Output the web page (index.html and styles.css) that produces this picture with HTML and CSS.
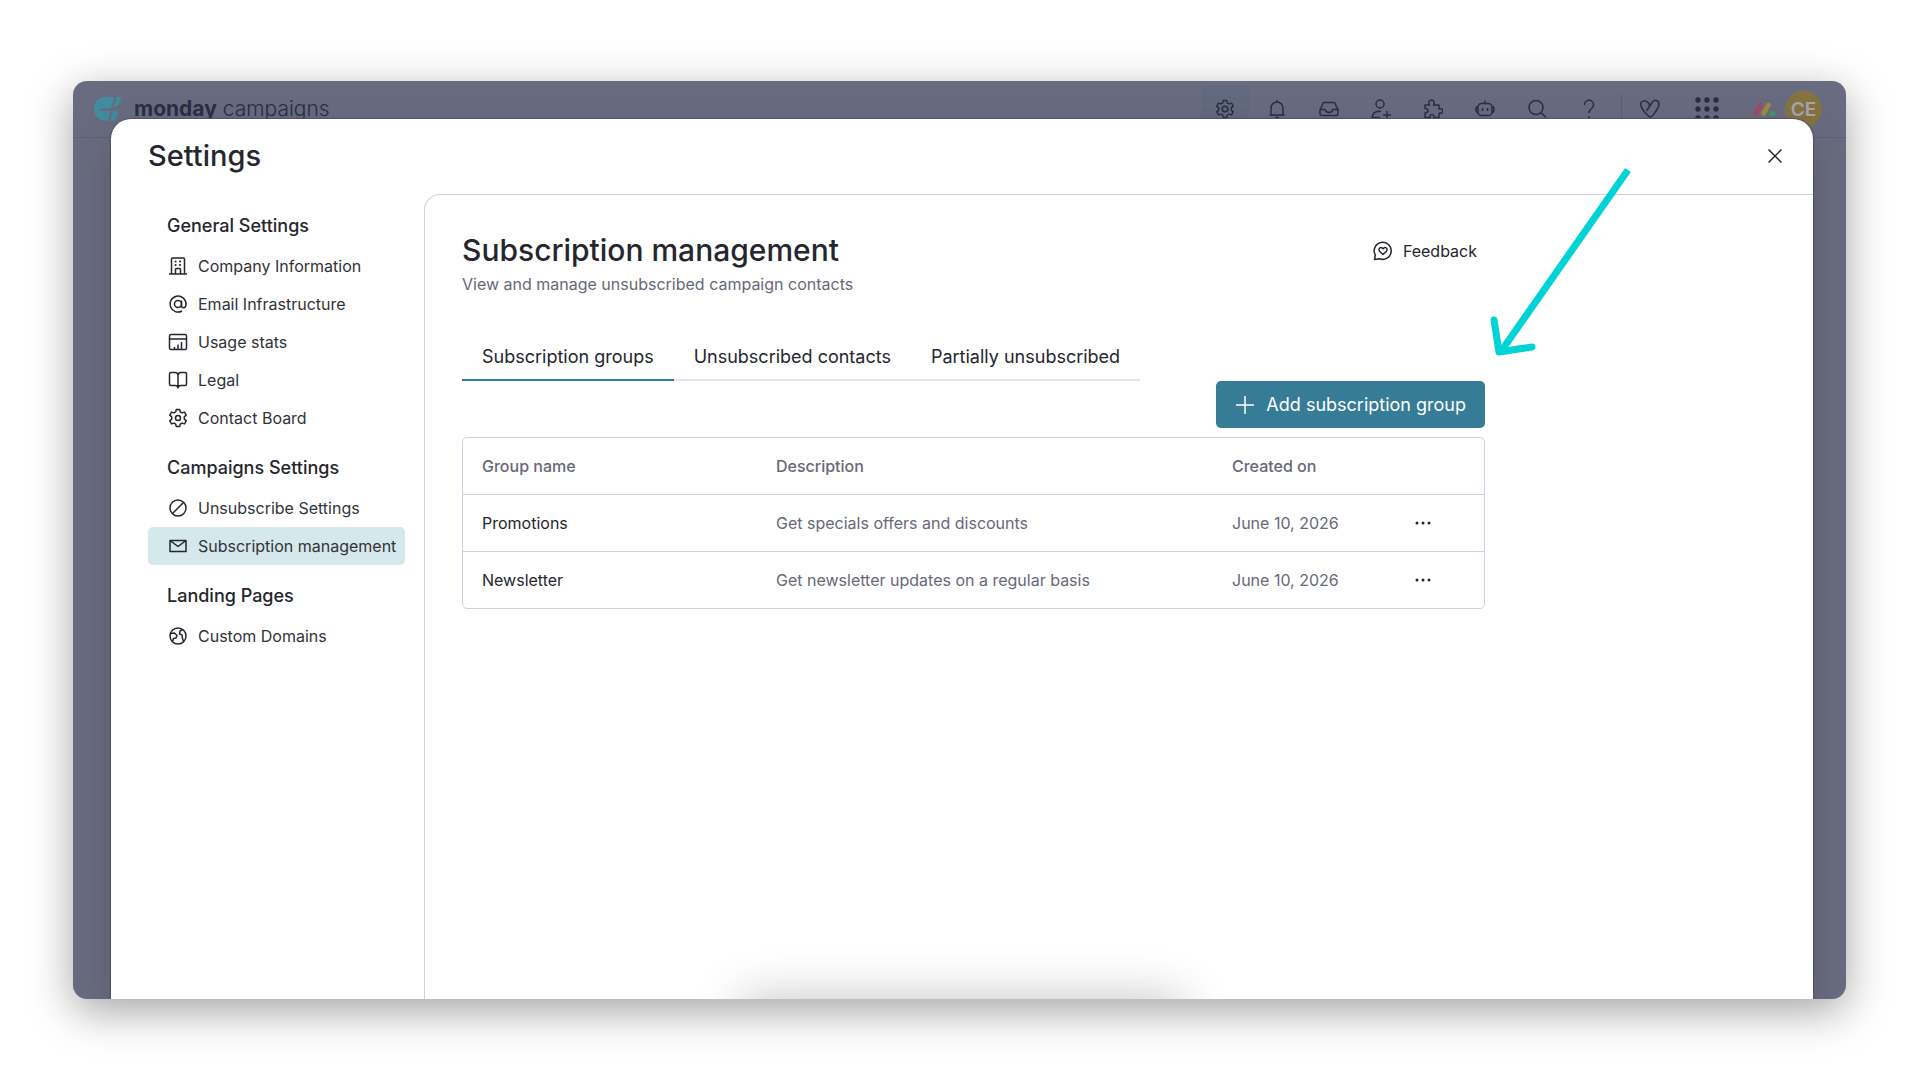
FILE: index.html
```html
<!DOCTYPE html>
<html lang="en">
<head>
    <meta charset="UTF-8">
    <meta name="viewport" content="width=device-width, initial-scale=1.0">
    <title>Settings - monday campaigns</title>
    <link rel="stylesheet" href="styles.css">
</head>
<body>
    <div class="window">
        <header class="topbar">
            <svg class="logo" viewBox="0 0 27 24" fill="#428da0">
                <path d="M20 0H12a12 12 0 0 0 0 24h2l2.400-10H7q-2-1 0-2.500h10.200z"/>
                <path d="M22.500 0H27q0 8-7.500 10.500z"/>
                <path d="M18.800 13.500q6 0 5 4L21 24h-4.700z"/>
            </svg>
            <div class="brand"><b>monday</b> campaigns</div>
            <nav class="tools">
                <button class="tool active" aria-label="Settings">
                    <svg viewBox="0 0 20 20"><path d="M8.300 1.500h3.400l.6 2.400 1.700 1 2.500-.8 1.700 3-1.900 1.800v2.200l1.900 1.800-1.700 3-2.500-.8-1.700 1-.6 2.400H8.300l-.6-2.400-1.700-1-2.500.8-1.700-3 1.900-1.800V8.900L1.800 7.100l1.700-3 2.500.8 1.700-1z"/><circle cx="10" cy="10" r="2.800"/></svg>
                </button>
                <button class="tool" aria-label="Notifications">
                    <svg viewBox="0 0 20 20"><path d="M10 1v2M2.500 16h15M4 16V9a6 6 0 0 1 12 0v7M8 18.500h4"/></svg>
                </button>
                <button class="tool" aria-label="Inbox">
                    <svg viewBox="0 0 20 20"><path d="M4.500 3.500h11l3.500 7v4q0 2-2 2H3q-2 0-2-2v-4zM1 10.500h5q1 3 4 3t4-3h5"/></svg>
                </button>
                <button class="tool" aria-label="Invite members">
                    <svg viewBox="0 0 20 20"><circle cx="9" cy="5" r="4"/><path d="M10 12.500q-8-1-9 6h8M16 12v8M12 16h8"/></svg>
                </button>
                <button class="tool" aria-label="Apps">
                    <svg viewBox="0 0 20 20"><path d="M2 6h4.500C5 3 6.500 1 8.500 1s3.500 2 2 5H16v4c5-1.500 5 5.500 0 4v4.500h-5c.5-4-4.500-4-4 0H2V14c4 0 4-5 0-4.500z"/></svg>
                </button>
                <button class="tool" aria-label="Assistant">
                    <svg viewBox="0 0 20 20"><rect x="3" y="4.500" width="14" height="12" rx="3.500"/><path d="M10 4.500V1.500M7.500 9v3M12.500 9v3M3 7.500q-2 0-2 3t2 3M17 7.500q2 0 2 3t-2 3"/></svg>
                </button>
                <button class="tool" aria-label="Search">
                    <svg viewBox="0 0 20 20"><circle cx="9" cy="8.500" r="7"/><path d="M14 13.500l5 5"/></svg>
                </button>
                <button class="tool" aria-label="Help">
                    <svg viewBox="0 0 20 20"><path d="M5.500 6C5.500-.3 14.500-.3 14.500 6c0 4-4.500 3.500-4.500 8M10 17v2"/></svg>
                </button>
            </nav>
            <span class="divider"></span>
            <svg class="hearts" viewBox="0 0 20 20"><path d="M10 8C8-1-1 1 1 7c1 3 5 8 8 10.500 3 1.500 4-1.500 7-5.500 2-3 3-5 3-7 0-4-5-5-7-1.500L6.500 12"/></svg>
            <svg class="dots" viewBox="0 0 24 24">
                <circle cx="3" cy="3" r="2.700"/><circle cx="12" cy="3" r="2.700"/><circle cx="21" cy="3" r="2.700"/>
                <circle cx="3" cy="12" r="2.700"/><circle cx="12" cy="12" r="2.700"/><circle cx="21" cy="12" r="2.700"/>
                <circle cx="3" cy="21" r="2.700"/><circle cx="12" cy="21" r="2.700"/><circle cx="21" cy="21" r="2.700"/>
            </svg>
            <svg class="mark" viewBox="0 0 22 14" fill="none" stroke-linecap="round" stroke-width="4.600">
                <path d="M2.500 11.500l5-8.500" stroke="#a54765"/>
                <path d="M10.500 11.500l5-8.500" stroke="#a38a41"/>
                <circle cx="19.500" cy="11.500" r="2.700" fill="#42996a"/>
            </svg>
            <span class="avatar">CE</span>
        </header>

        <div class="modal" role="dialog" aria-labelledby="modal-title">
            <div class="modal-header">
                <h1 id="modal-title">Settings</h1>
                <button class="close" aria-label="Close">
                    <svg viewBox="0 0 14 14"><path d="M0.500 0.500l13 13M13.500 0.500l-13 13"/></svg>
                </button>
            </div>
            <div class="modal-body">
                <nav class="sidebar">
                    <h2>General Settings</h2>
                    <a class="item" href="#">
                        <svg viewBox="0 0 20 20"><path d="M1 18h18M3.500 18V3q0-1 1-1h11q1 0 1 1v15M7.500 18v-4.500q0-1 1-1h3q1 0 1 1V18"/><path class="dot" d="M7.500 5.500h.1M12 5.500h.1M7.500 9h.1M12 9h.1"/></svg>
                        Company Information
                    </a>
                    <a class="item" href="#">
                        <svg viewBox="0 0 20 20"><circle cx="10" cy="10" r="3.500"/><path d="M13.500 6.500v5q0 2.300 2 2.300c2 0 2.500-2 2.500-3.800a8 8 0 1 0-4 7"/></svg>
                        Email Infrastructure
                    </a>
                    <a class="item" href="#">
                        <svg viewBox="0 0 20 20"><rect x="1.500" y="2.500" width="17" height="15" rx="1.500"/><path d="M1.500 7h17M6.500 17v-2M10 17v-4.500M13.500 17v-7"/></svg>
                        Usage stats
                    </a>
                    <a class="item" href="#">
                        <svg viewBox="0 0 20 20"><path d="M10 5.500q0-3-3-3H3q-1.500 0-1.500 1.500v10q0 1.500 1.500 1.500h4q3 0 3 2.500zM10 5.500q0-3 3-3h4q1.500 0 1.500 1.500v10q0 1.500-1.500 1.500h-4q-3 0-3 2.500"/></svg>
                        Legal
                    </a>
                    <a class="item" href="#">
                        <svg viewBox="0 0 20 20"><path d="M8.300 1.500h3.400l.6 2.400 1.700 1 2.500-.8 1.700 3-1.900 1.800v2.200l1.900 1.800-1.700 3-2.500-.8-1.700 1-.6 2.400H8.300l-.6-2.400-1.700-1-2.500.8-1.700-3 1.900-1.800V8.900L1.800 7.100l1.700-3 2.500.8 1.700-1z"/><circle cx="10" cy="10" r="2.500"/></svg>
                        Contact Board
                    </a>

                    <h2>Campaigns Settings</h2>
                    <a class="item" href="#">
                        <svg viewBox="0 0 20 20"><circle cx="10" cy="10" r="8"/><path d="M4.500 15.500l11-11"/></svg>
                        Unsubscribe Settings
                    </a>
                    <a class="item selected" href="#">
                        <svg viewBox="0 0 20 20"><path d="M2 4.500h16v11H2zM2 4.500l8 6 8-6"/></svg>
                        Subscription management
                    </a>

                    <h2>Landing Pages</h2>
                    <a class="item" href="#">
                        <svg viewBox="0 0 20 20"><circle cx="10" cy="10" r="8"/><path d="M2.500 7.500l4-.5 2.500 2.500-1 2.500-2.500.5-1 3M14.500 3.500L12 5l-.5 3 2.500 1 .5 3.500 1 3"/></svg>
                        Custom Domains
                    </a>
                </nav>

                <main class="content">
                    <div class="content-inner">
                        <div class="page-head">
                            <div>
                                <h2>Subscription management</h2>
                                <p>View and manage unsubscribed campaign contacts</p>
                            </div>
                            <button class="feedback">
                                <svg viewBox="0 0 20 20"><path d="M1.500 18.500l.8-4.500A8.500 8.500 0 1 1 6.500 17.700z"/><path d="M10 13.500l-3.500-3.300c-2-3 2-5 3.500-2.400 1.500-2.600 5.500-.6 3.500 2.400z"/></svg>
                                Feedback
                            </button>
                        </div>

                        <div class="tabs" role="tablist">
                            <button class="tab current" role="tab" aria-selected="true">Subscription groups</button>
                            <button class="tab" role="tab">Unsubscribed contacts</button>
                            <button class="tab" role="tab">Partially unsubscribed</button>
                        </div>

                        <button class="add">
                            <svg viewBox="0 0 18 18"><path d="M9 0v18M0 9h18"/></svg>
                            Add subscription group
                        </button>

                        <table class="groups">
                            <thead>
                                <tr>
                                    <th class="col-name">Group name</th>
                                    <th class="col-desc">Description</th>
                                    <th class="col-date">Created on</th>
                                    <th></th>
                                </tr>
                            </thead>
                            <tbody>
                                <tr>
                                    <td class="name">Promotions</td>
                                    <td>Get specials offers and discounts</td>
                                    <td>June 10, 2026</td>
                                    <td><button class="more" aria-label="More options"><svg viewBox="0 0 16 4"><circle cx="2" cy="2" r="1.500"/><circle cx="8" cy="2" r="1.500"/><circle cx="14" cy="2" r="1.500"/></svg></button></td>
                                </tr>
                                <tr>
                                    <td class="name">Newsletter</td>
                                    <td>Get newsletter updates on a regular basis</td>
                                    <td>June 10, 2026</td>
                                    <td><button class="more" aria-label="More options"><svg viewBox="0 0 16 4"><circle cx="2" cy="2" r="1.500"/><circle cx="8" cy="2" r="1.500"/><circle cx="14" cy="2" r="1.500"/></svg></button></td>
                                </tr>
                            </tbody>
                        </table>
                    </div>
                </main>
            </div>

            <svg class="arrow" viewBox="0 0 144 192">
                <path d="M138 2L12 182"/>
                <path class="head" d="M4 152l5 32 33-5"/>
            </svg>
        </div>
    </div>
</body>
</html>
```
FILE: styles.css
```css
* {
    box-sizing: border-box;
}
body {
    margin: 0;
    padding: 81px 74px 81px 73px;
    min-height: 100vh;
    display: flex;
    background-color: white;
    color: #25262e;
    font-family: Inter, "Liberation Sans", sans-serif;
    font-size: 16px;
}
h1, h2, p {
    margin: 0;
}
button {
    padding: 0;
    border: none;
    background: none;
    color: inherit;
    font: inherit;
}
svg {
    display: block;
    flex-shrink: 0;
}

/* window and top bar */
.window {
    flex: 1;
    display: flex;
    flex-direction: column;
    overflow: hidden;
    border-radius: 14px;
    background-color: #696c81;
    box-shadow: 0 12px 44px rgba(0, 0, 0, 0.36);
}
.topbar {
    display: flex;
    align-items: center;
    height: 57px;
    padding: 0 24px 0 21px;
    border-bottom: 1px solid #5e617a;
    color: #2b2d45;
}
.logo {
    width: 27px;
    height: 24px;
}
.brand {
    margin-left: 13px;
    padding-bottom: 2px;
    font-size: 21px;
    font-weight: 300;
}
.brand b {
    font-weight: 700;
}
.tools {
    display: flex;
    gap: 4px;
    margin-left: auto;
}
.tool {
    display: flex;
    justify-content: center;
    align-items: center;
    width: 48px;
    height: 48px;
    border-radius: 5px;
}
.tool.active {
    background-color: #63697f;
}
.tool svg, .hearts {
    width: 20px;
    height: 20px;
    fill: none;
    stroke: #2b2d45;
    stroke-width: 1.5;
    stroke-linejoin: round;
}
.divider {
    width: 1px;
    height: 28px;
    margin: 0 18px 0 8px;
    background-color: #5a5d77;
}
.dots {
    width: 24px;
    height: 24px;
    margin: 0 34px 0 35px;
    fill: #2b2d45;
}
.mark {
    width: 22px;
    height: 14px;
    margin-right: 10px;
    overflow: visible;
}
.avatar {
    display: flex;
    justify-content: center;
    align-items: center;
    width: 37px;
    height: 37px;
    border-radius: 50%;
    background-color: #857340;
    color: #a6a6ac;
    font-size: 19px;
    font-weight: 600;
}

/* settings dialog */
.modal {
    position: relative;
    flex: 1;
    display: flex;
    flex-direction: column;
    margin: -19px 33px 0 38px;
    border-radius: 20px 20px 0 0;
    background-color: white;
    box-shadow: 0 14px 40px rgba(60, 45, 50, 0.3), 0 0 1px 1px #56586c;
}
/* soft shade that rises from the lower edge */
.modal::after {
    content: "";
    position: absolute;
    top: 100%;
    left: 37%;
    right: 37%;
    height: 60px;
    box-shadow: 0 0 50px rgba(0, 0, 0, 0.24);
}
.modal-header {
    display: flex;
    justify-content: space-between;
    align-items: center;
    height: 75px;
    padding: 0 31px 2px 37px;
}
.modal-header h1 {
    font-size: 29px;
    font-weight: 500;
}
.close svg {
    width: 14px;
    height: 14px;
    fill: none;
    stroke: #25262e;
    stroke-width: 1.5;
}
.modal-body {
    flex: 1;
    display: flex;
}

/* sidebar */
.sidebar {
    width: 313px;
    padding: 20px 19px 20px 37px;
}
.sidebar h2 {
    margin: 19px 0 9px 19px;
    font-size: 18px;
    font-weight: 500;
    line-height: 24px;
}
.sidebar h2:first-child {
    margin-top: 0;
}
.item {
    display: flex;
    align-items: center;
    gap: 10px;
    height: 38px;
    padding-left: 20px;
    border-radius: 5px;
    color: #323338;
    text-decoration: none;
    white-space: nowrap;
}
.item.selected {
    background-color: #d5e8ec;
}
.item svg, .feedback svg {
    width: 20px;
    height: 20px;
    fill: none;
    stroke: #25262e;
    stroke-width: 1.5;
    stroke-linejoin: round;
}
.item .dot {
    stroke-width: 2;
    stroke-linecap: round;
}

/* content */
.content {
    flex: 1;
    padding: 37px;
    border-top: 1px solid #cfd1e2;
    border-left: 1px solid #cfd1e2;
    border-top-left-radius: 16px;
}
.content-inner {
    display: flex;
    flex-direction: column;
    max-width: 1023px;
}
.page-head {
    display: flex;
    justify-content: space-between;
    align-items: flex-start;
}
.page-head h2 {
    font-size: 30px;
    font-weight: 500;
    line-height: 36px;
}
.page-head p {
    margin-top: 4px;
    color: #676879;
    line-height: 24px;
}
.feedback {
    display: flex;
    align-items: center;
    gap: 10px;
    height: 38px;
    padding-right: 8px;
}
.tabs {
    display: flex;
    align-self: flex-start;
    margin-top: 37px;
    border-bottom: 2px solid #e3e3ec;
}
.tab {
    height: 48px;
    padding: 0 20px;
    margin-bottom: -2px;
    border-bottom: 2px solid transparent;
    font-size: 18px;
}
.tab.current {
    border-bottom-color: #347b95;
}
.add {
    display: flex;
    align-items: center;
    align-self: flex-end;
    gap: 12px;
    height: 47px;
    padding: 0 19px 0 20px;
    border-radius: 5px;
    background-color: #377c96;
    color: white;
    font-size: 18px;
}
.add svg {
    width: 18px;
    height: 18px;
    stroke: white;
    stroke-width: 1.5;
}
.groups {
    margin-top: 9px;
    border: 1px solid #cfd1e2;
    border-radius: 5px;
    border-spacing: 0;
    table-layout: fixed;
    color: #676879;
    text-align: left;
}
.groups th, .groups td {
    height: 57px;
    padding: 0 0 0 19px;
    font-weight: 400;
}
.groups th {
    height: 56px;
    font-weight: 500;
}
.groups td {
    border-top: 1px solid #cfd1e2;
}
.groups .name {
    color: #25262e;
}
.col-name {
    width: 294px;
}
.col-desc {
    width: 456px;
}
.col-date {
    width: 183px;
}
.more {
    display: flex;
    align-items: center;
    height: 24px;
}
.more svg {
    width: 16px;
    height: 4px;
    fill: #25262e;
}

/* pointer towards the add button */
.arrow {
    position: absolute;
    top: 49px;
    left: 1379px;
    width: 144px;
    height: 192px;
    fill: none;
    stroke: #00d3d6;
    stroke-width: 7;
    stroke-linejoin: round;
}
.arrow .head {
    stroke-linecap: round;
}
```
